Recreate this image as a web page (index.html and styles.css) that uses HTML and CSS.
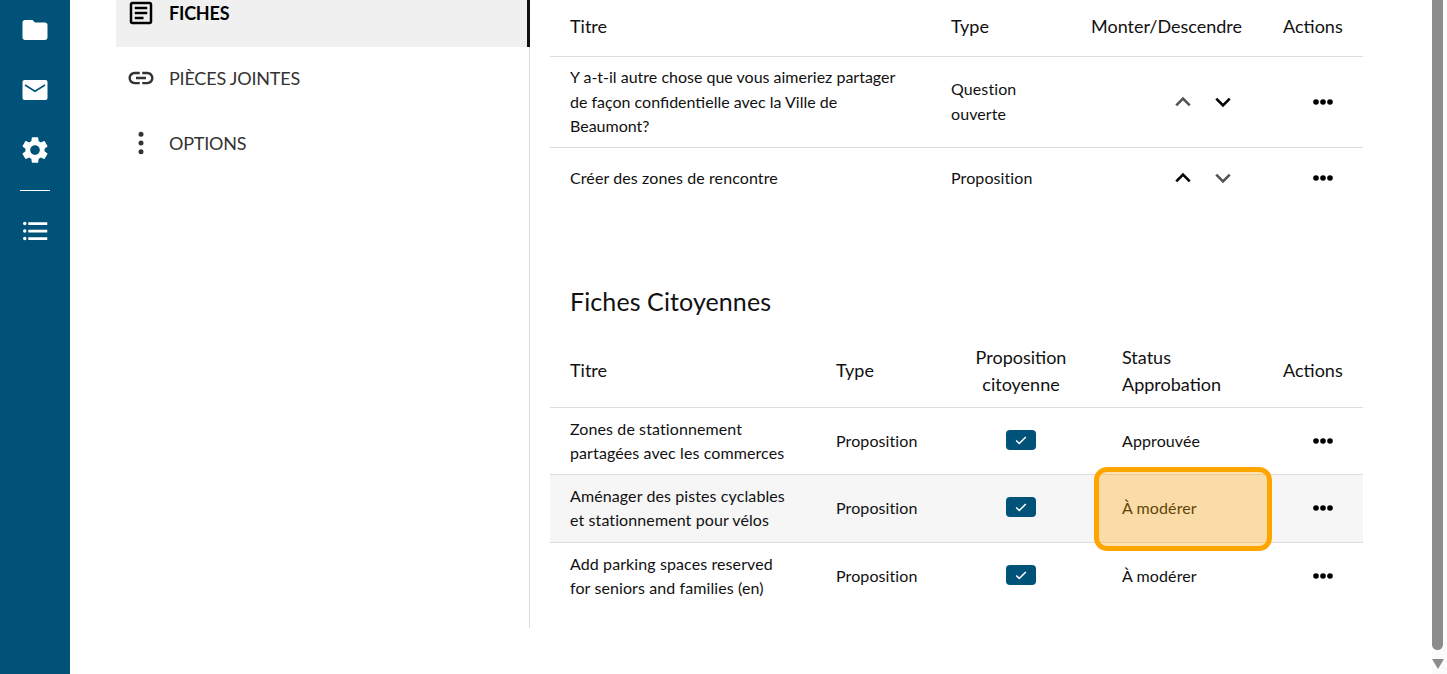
FILE: index.html
```html
<!DOCTYPE html>
<html lang="fr">
<head>
    <meta charset="UTF-8">
    <meta name="viewport" content="width=device-width, initial-scale=1.0">
    <title>Fiches</title>
    <link rel="stylesheet" href="styles.css">
</head>
<body>
<div class="app">

    <!-- Barre de navigation -->
    <nav class="rail">
        <svg class="rail-icon" viewBox="0 0 24 24"><path d="M10 4H4c-1.1 0-2 .9-2 2v12c0 1.1.9 2 2 2h16c1.1 0 2-.9 2-2V8c0-1.1-.9-2-2-2h-8l-2-2z"/></svg>
        <svg class="rail-icon" viewBox="0 0 24 24"><rect x="2" y="4" width="20" height="16" rx="1.6"/><path class="rail-fold" d="M4 8l8 5 8-5"/></svg>
        <svg class="rail-icon rail-gear" viewBox="0 0 24 24"><path d="M19.14 12.94c.04-.3.06-.61.06-.94 0-.32-.02-.64-.07-.94l2.03-1.58c.18-.14.23-.41.12-.61l-1.92-3.32c-.12-.22-.37-.29-.59-.22l-2.39.96c-.5-.38-1.03-.7-1.62-.94l-.36-2.54c-.04-.24-.24-.41-.48-.41h-3.84c-.24 0-.43.17-.47.41l-.36 2.54c-.59.24-1.13.57-1.62.94l-2.39-.96c-.22-.08-.47 0-.59.22L2.74 8.87c-.12.21-.08.47.12.61l2.03 1.58c-.05.3-.09.63-.09.94s.02.64.07.94l-2.03 1.58c-.18.14-.23.41-.12.61l1.92 3.32c.12.22.37.29.59.22l2.39-.96c.5.38 1.03.7 1.62.94l.36 2.54c.05.24.24.41.48.41h3.84c.24 0 .44-.17.47-.41l.36-2.54c.59-.24 1.13-.56 1.62-.94l2.39.96c.22.08.47 0 .59-.22l1.92-3.32c.12-.22.07-.47-.12-.61l-2.01-1.58zM12 15.6c-1.98 0-3.6-1.62-3.6-3.6s1.62-3.6 3.6-3.6 3.6 1.62 3.6 3.6-1.62 3.6-3.6 3.6z"/></svg>
        <div class="rail-line"></div>
        <svg class="rail-icon" viewBox="0 0 24 24"><circle cx="3.8" cy="6" r="1.4"/><circle cx="3.8" cy="12" r="1.4"/><circle cx="3.8" cy="18" r="1.4"/><rect x="6.6" y="5" width="15.2" height="2.2"/><rect x="6.6" y="11" width="15.2" height="2.2"/><rect x="6.6" y="17" width="15.2" height="2.2"/></svg>
    </nav>

    <div class="page">
        <!-- Menu de gauche -->
        <div class="side-menu">
            <div class="menu-item active">
                <svg class="menu-icon" viewBox="0 0 24 24"><path d="M19 5v14H5V5h14m0-2H5c-1.1 0-2 .9-2 2v14c0 1.1.9 2 2 2h14c1.1 0 2-.9 2-2V5c0-1.1-.9-2-2-2z"/><path d="M7 7h10v2H7zM7 11h10v2H7zM7 15h7v2H7z"/></svg>
                <span>FICHES</span>
            </div>
            <div class="menu-item">
                <svg class="menu-icon" viewBox="0 0 24 24"><path d="M3.9 12c0-1.71 1.39-3.1 3.1-3.1h4V7H7c-2.76 0-5 2.24-5 5s2.24 5 5 5h4v-1.9H7c-1.71 0-3.1-1.39-3.1-3.1zM8 13h8v-2H8v2zm9-6h-4v1.9h4c1.71 0 3.1 1.39 3.1 3.1s-1.39 3.1-3.1 3.1h-4V17h4c2.76 0 5-2.24 5-5s-2.24-5-5-5z"/></svg>
                <span>PIÈCES JOINTES</span>
            </div>
            <div class="menu-item">
                <svg class="menu-icon" viewBox="0 0 24 24"><circle cx="12" cy="5" r="2"/><circle cx="12" cy="12" r="2"/><circle cx="12" cy="19" r="2"/></svg>
                <span>OPTIONS</span>
            </div>
        </div>

        <!-- Contenu -->
        <div class="content">
            <table class="grid grid-fiches">
                <colgroup>
                    <col class="c-381"><col class="c-140"><col class="c-192"><col class="c-100">
                </colgroup>
                <thead>
                    <tr>
                        <th>Titre</th>
                        <th>Type</th>
                        <th>Monter/Descendre</th>
                        <th>Actions</th>
                    </tr>
                </thead>
                <tbody>
                    <tr>
                        <td class="plain">Y a-t-il autre chose que vous aimeriez partager de façon confidentielle avec la Ville de Beaumont?</td>
                        <td>Question ouverte</td>
                        <td class="move">
                            <button class="arrow dim"><svg viewBox="0 0 16 16"><path d="M2 11l6-6 6 6"/></svg></button><button class="arrow"><svg viewBox="0 0 16 16"><path d="M2 5l6 6 6-6"/></svg></button>
                        </td>
                        <td class="actions"><svg class="dots" viewBox="0 0 20 6"><circle cx="3" cy="3" r="2.8"/><circle cx="10" cy="3" r="2.8"/><circle cx="17" cy="3" r="2.8"/></svg></td>
                    </tr>
                    <tr class="tall">
                        <td>Créer des zones de rencontre</td>
                        <td>Proposition</td>
                        <td class="move">
                            <button class="arrow"><svg viewBox="0 0 16 16"><path d="M2 11l6-6 6 6"/></svg></button><button class="arrow dim"><svg viewBox="0 0 16 16"><path d="M2 5l6 6 6-6"/></svg></button>
                        </td>
                        <td class="actions"><svg class="dots" viewBox="0 0 20 6"><circle cx="3" cy="3" r="2.8"/><circle cx="10" cy="3" r="2.8"/><circle cx="17" cy="3" r="2.8"/></svg></td>
                    </tr>
                </tbody>
            </table>

            <h2 class="section-title">Fiches Citoyennes</h2>

            <table class="grid grid-citoyennes">
                <colgroup>
                    <col class="c-266"><col class="c-124"><col class="c-162"><col class="c-161"><col class="c-100">
                </colgroup>
                <thead>
                    <tr>
                        <th>Titre</th>
                        <th>Type</th>
                        <th class="center">Proposition citoyenne</th>
                        <th>Status Approbation</th>
                        <th>Actions</th>
                    </tr>
                </thead>
                <tbody>
                    <tr>
                        <td>Zones de stationnement partagées avec les commerces</td>
                        <td>Proposition</td>
                        <td class="center"><span class="check"><svg viewBox="0 0 16 16"><path d="M2.5 8.5l3.5 3.5 7.5-7.5"/></svg></span></td>
                        <td>Approuvée</td>
                        <td class="actions"><svg class="dots" viewBox="0 0 20 6"><circle cx="3" cy="3" r="2.8"/><circle cx="10" cy="3" r="2.8"/><circle cx="17" cy="3" r="2.8"/></svg></td>
                    </tr>
                    <tr class="hover">
                        <td>Aménager des pistes cyclables et stationnement pour vélos</td>
                        <td>Proposition</td>
                        <td class="center"><span class="check"><svg viewBox="0 0 16 16"><path d="M2.5 8.5l3.5 3.5 7.5-7.5"/></svg></span></td>
                        <td class="marked">À modérer<div class="highlight"></div></td>
                        <td class="actions"><svg class="dots" viewBox="0 0 20 6"><circle cx="3" cy="3" r="2.8"/><circle cx="10" cy="3" r="2.8"/><circle cx="17" cy="3" r="2.8"/></svg></td>
                    </tr>
                    <tr>
                        <td>Add parking spaces reserved for seniors and families (en)</td>
                        <td>Proposition</td>
                        <td class="center"><span class="check"><svg viewBox="0 0 16 16"><path d="M2.5 8.5l3.5 3.5 7.5-7.5"/></svg></span></td>
                        <td>À modérer</td>
                        <td class="actions"><svg class="dots" viewBox="0 0 20 6"><circle cx="3" cy="3" r="2.8"/><circle cx="10" cy="3" r="2.8"/><circle cx="17" cy="3" r="2.8"/></svg></td>
                    </tr>
                </tbody>
            </table>
        </div>
    </div>

    <!-- Barre de défilement -->
    <div class="scrollbar">
        <div class="scroll-thumb"></div>
        <div class="scroll-arrow"></div>
    </div>
</div>
</body>
</html>
```

FILE: styles.css
```css
/* Genel */
html, body {
    margin: 0;
    padding: 0;
    height: 100%;
    overflow: hidden;
    background-color: #fff;
}

body {
    font-family: Lato, "Open Sans", sans-serif;
    font-size: 16px;
    color: #111;
}

.app {
    display: flex;
    height: 674px;
    overflow: hidden;
}

/* Rail */
.rail {
    width: 70px;
    flex: none;
    display: flex;
    flex-direction: column;
    align-items: center;
    padding-top: 15px;
    background-color: #005279;
    box-sizing: border-box;
}

.rail-icon {
    width: 30px;
    height: 30px;
    margin-bottom: 30px;
    fill: #fff;
}

.rail-gear {
    width: 32px;
    height: 32px;
    margin: -1px 0 29px;
}

.rail-fold {
    fill: none;
    stroke: #005279;
    stroke-width: 1.2;
}

.rail-line {
    width: 30px;
    height: 1px;
    margin: -5px 0 25px;
    background-color: #fff;
}

/* Page */
.page {
    flex: 1;
    display: flex;
    align-items: flex-start;
    margin-top: -18px;
    padding: 0 69px 0 46px;
    min-width: 0;
}

.side-menu {
    width: 414px;
    height: 646px;
    flex: none;
    box-sizing: border-box;
    border-right: 1px solid #ddd;
}

.menu-item {
    display: flex;
    align-items: center;
    gap: 13px;
    height: 65px;
    box-sizing: border-box;
    padding: 0 0 3px 10px;
    font-size: 18px;
    letter-spacing: -0.2px;
    color: #333;
}

.menu-item.active {
    margin-right: -1px;
    border-right: 3px solid #111;
    background-color: #f0f0f0;
    color: #000;
    font-weight: 700;
}

.menu-icon {
    width: 30px;
    height: 30px;
    flex: none;
    fill: currentColor;
}

/* Tablolar */
.content {
    flex: 1;
    padding: 16px 0 0 20px;
    min-width: 0;
}

.grid {
    width: 813px;
    table-layout: fixed;
    border-collapse: collapse;
}

.c-381 { width: 381px; }
.c-140 { width: 140px; }
.c-192 { width: 192px; }
.c-100 { width: 100px; }
.c-266 { width: 266px; }
.c-124 { width: 124px; }
.c-162 { width: 162px; }
.c-161 { width: 161px; }

.grid th {
    padding: 8px 20px;
    font-size: 18px;
    font-weight: 400;
    line-height: 27px;
    text-align: left;
    border-bottom: 1px solid #ddd;
}

.grid td {
    padding: 8px 20px;
    line-height: 24.5px;
    letter-spacing: 0.1px;
    border-top: 1px solid #ddd;
}

.grid td.plain {
    letter-spacing: 0;
}

.grid tbody tr:first-child td {
    border-top: none;
}

.grid-fiches th {
    height: 42px;
    padding-top: 7px;
    padding-bottom: 9px;
}

.grid-fiches .tall td {
    height: 45px;
}

.grid-citoyennes th {
    padding-bottom: 9px;
}

.grid-citoyennes td {
    padding-top: 9px;
    padding-bottom: 9px;
}

.grid-citoyennes tbody tr:first-child td {
    padding-bottom: 8px;
}

.grid th.center,
.grid td.center {
    text-align: center;
}

.grid td.actions {
    padding-right: 30px;
}

.hover td {
    background-color: #f6f6f6;
}

.section-title {
    margin: 74px 0 17px 20px;
    font-size: 25px;
    font-weight: 400;
    line-height: 36px;
    letter-spacing: 0.1px;
}

/* Butonlar */
.move {
    text-align: right;
    white-space: nowrap;
}

.grid td.move {
    padding-top: 0;
    padding-bottom: 0;
}

.arrow {
    width: 40px;
    height: 40px;
    padding: 0;
    border: none;
    background: none;
    vertical-align: middle;
}

.arrow svg {
    display: block;
    width: 18px;
    height: 18px;
    margin: 0 auto;
    fill: none;
    stroke: #000;
    stroke-width: 2.3;
}

.arrow.dim svg {
    stroke: #555;
}

.dots {
    display: block;
    width: 20px;
    height: 6px;
    margin-left: auto;
    fill: #000;
}

.check {
    display: flex;
    align-items: center;
    justify-content: center;
    width: 30px;
    height: 20px;
    margin: 0 auto 2px;
    border-radius: 4px;
    background-color: #005279;
}

.check svg {
    width: 14px;
    height: 14px;
    fill: none;
    stroke: #fff;
    stroke-width: 1.8;
}

/* Vurgu */
.marked {
    position: relative;
}

.highlight {
    position: absolute;
    top: -8px;
    bottom: -9px;
    left: -8px;
    right: -9px;
    box-sizing: border-box;
    border: 5px solid #ffa500;
    border-radius: 13px;
    background-color: rgba(255, 165, 0, 0.32);
}

/* Kaydirma cubugu */
.scrollbar {
    width: 15px;
    flex: none;
    background-color: #fbfbfb;
}

.scroll-thumb {
    width: 11px;
    height: 650px;
    border-radius: 0 0 6px 6px;
    background-color: #8c8c8c;
}

.scroll-arrow {
    width: 0;
    height: 0;
    margin-top: 9px;
    border-left: 6px solid transparent;
    border-right: 6px solid transparent;
    border-top: 10px solid #8c8c8c;
}
```
